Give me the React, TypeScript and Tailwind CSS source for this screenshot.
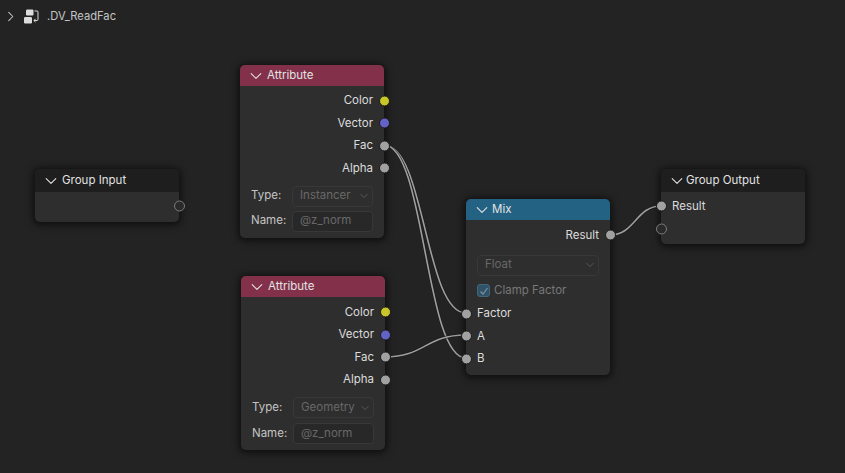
import type { ReactNode } from "react";

const wires = [
	"M384 145 C 425 145, 425 313, 466 313",
	"M384 145 C 425 145, 425 358, 466 358",
	"M385 357 C 425 357, 425 335, 466 335",
	"M610 235 C 635 235, 636 206, 661 206",
];

function Chevron({ className }: { className: string }) {
	return (
		<svg viewBox="0 0 10 10" className={className} fill="none" stroke="currentColor" strokeWidth="0.9" strokeLinecap="round" strokeLinejoin="round">
			<path d="M1 3 L5 7 L9 3" />
		</svg>
	);
}

function Socket({ side, color = "bg-[#a1a1a1]" }: { side: "left" | "right"; color?: string }) {
	return (
		<span className={`absolute top-1/2 -translate-y-1/2 h-[11px] w-[11px] rounded-full border border-[#1c1c1c] ${color} ${side === "left" ? "left-[-5.5px]" : "right-[-5.5px]"}`} />
	);
}

function VirtualSocket({ side }: { side: "left" | "right" }) {
	return (
		<span className={`absolute top-1/2 -translate-y-1/2 h-[11px] w-[11px] rounded-full border border-[#7d7d7d] bg-[#2a2a2a] ${side === "left" ? "left-[-5.5px]" : "right-[-5.5px]"}`} />
	);
}

function Output({ label, color }: { label: string; color?: string }) {
	return (
		<div className="relative flex h-[22.5px] items-center justify-end pr-[11px] text-[#dcdcdc]">
			{label}
			<Socket side="right" color={color} />
		</div>
	);
}

function Input({ label }: { label: string }) {
	return (
		<div className="relative flex h-[22.5px] items-center pl-[11px] text-[#dcdcdc]">
			{label}
			<Socket side="left" />
		</div>
	);
}

function Field({ label, value, dropdown }: { label: string; value: string; dropdown?: boolean }) {
	return (
		<div className="flex items-center px-[11px] text-[#c4c4c4]">
			<span className="w-[41px] shrink-0">{label}</span>
			<div className={`flex h-[21px] flex-1 items-center justify-between rounded-[4px] border border-[#383838] pl-[7px] pr-[4px] text-[#686868] ${dropdown ? "bg-[#2e2e2e]" : "bg-[#282828]"}`}>
				{value}
				{dropdown && <Chevron className="h-[8px] w-[8px]" />}
			</div>
		</div>
	);
}

function Node({ title, header, titleGap, pos, children }: { title: string; header: string; titleGap: string; pos: string; children: ReactNode }) {
	return (
		<div className={`absolute w-[144px] rounded-[5px] bg-[#2e2e2e] text-[11.5px] shadow-[0_1px_7px_2px_rgba(0,0,0,0.6)] ${pos}`}>
			<div className={`flex items-center rounded-t-[5px] pl-[10px] text-[#e2e2e2] ${header}`}>
				<Chevron className={`h-[12px] w-[12px] ${titleGap}`} />
				{title}
			</div>
			{children}
		</div>
	);
}

function AttributeNode({ pos, type, body, gap }: { pos: string; type: string; body: string; gap: string }) {
	return (
		<Node title="Attribute" header="h-[21px] bg-[#83314a]" titleGap="mr-[5px]" pos={pos}>
			<div className={body}>
				<Output label="Color" color="bg-[#c7c729]" />
				<Output label="Vector" color="bg-[#6363c7]" />
				<Output label="Fac" />
				<Output label="Alpha" />
				<div className={`mt-[6px] flex flex-col ${gap}`}>
					<Field label="Type:" value={type} dropdown />
					<Field label="Name:" value="@z_norm" />
				</div>
			</div>
		</Node>
	);
}

export default function App() {
	return (
		<div className="relative h-[473px] w-[845px] overflow-hidden bg-[#232323] font-['Inter',sans-serif]">
			<div className="flex h-[32px] items-center pl-[7px] text-[11.2px] text-[#c4c4c4]">
				<svg viewBox="0 0 8 12" className="h-[11px] w-[8px]" fill="none" stroke="#c4c4c4" strokeWidth="1.1" strokeLinecap="round" strokeLinejoin="round">
					<path d="M1.5 1.5 L6 6 L1.5 10.5" />
				</svg>
				<svg viewBox="0 0 15 15" className="ml-[9px] h-[15px] w-[15px]">
					<rect x="2" y="0.5" width="7.5" height="6" rx="1.2" fill="#dcdcdc" />
					<rect x="0" y="8" width="8" height="6.5" rx="1.2" fill="#dcdcdc" />
					<path d="M10.5 2 H13 a1 1 0 0 1 1 1 V10.5 a1 1 0 0 1 -1 1 H10 M11.6 9.8 L9.9 11.5 L11.6 13.2" fill="none" stroke="#dcdcdc" strokeWidth="1" />
				</svg>
				<span className="ml-[8px]">.DV_ReadFac</span>
			</div>

			<svg className="absolute inset-0 h-full w-full" viewBox="0 0 845 473" fill="none">
				{wires.map((d) => (
					<g key={d}>
						<path d={d} stroke="#1a1a1a" strokeWidth="3" opacity="0.7" />
						<path d={d} stroke="#9e9e9e" strokeWidth="1.6" />
					</g>
				))}
			</svg>

			<Node title="Group Input" header="h-[23px] bg-[#1e1e1e]" titleGap="mr-[5px]" pos="left-[35px] top-[169px]">
				<div className="pt-[3px] pb-[4px]">
					<div className="relative h-[22.5px]">
						<VirtualSocket side="right" />
					</div>
				</div>
			</Node>

			<AttributeNode pos="left-[240px] top-[65px]" type="Instancer" body="pt-[3.5px] pb-[6px]" gap="gap-[4px]" />
			<AttributeNode pos="left-[241px] top-[276px]" type="Geometry" body="pt-[4px] pb-[6px]" gap="gap-[5px]" />

			<Node title="Mix" header="h-[21px] bg-[#246283]" titleGap="mr-[4px]" pos="left-[466px] top-[199px]">
				<div className="pt-[4px] pb-[5px]">
					<Output label="Result" />
					<div className="mt-[8px] px-[11px]">
						<div className="flex h-[21px] items-center justify-between rounded-[4px] border border-[#383838] bg-[#2e2e2e] pl-[7px] pr-[4px] text-[#686868]">
							Float
							<Chevron className="h-[8px] w-[8px]" />
						</div>
					</div>
					<div className="mt-[4px] mb-[1px] flex h-[22px] items-center gap-[4px] px-[11px] text-[#787878]">
						<span className="flex h-[13px] w-[13px] items-center justify-center rounded-[3px] border border-[#46667b] bg-[#2f5269]">
							<svg viewBox="0 0 10 10" className="h-[10px] w-[10px]" fill="none" stroke="#7f8f9a" strokeWidth="1.2">
								<path d="M1.5 5.5 L4 8 L8.5 2" />
							</svg>
						</span>
						Clamp Factor
					</div>
					<Input label="Factor" />
					<Input label="A" />
					<Input label="B" />
				</div>
			</Node>

			<Node title="Group Output" header="h-[23px] bg-[#1e1e1e]" titleGap="mr-[3px]" pos="left-[661px] top-[169px]">
				<div className="pt-[3px] pb-[4px]">
					<Input label="Result" />
					<div className="relative h-[22.5px]">
						<VirtualSocket side="left" />
					</div>
				</div>
			</Node>
		</div>
	);
}
